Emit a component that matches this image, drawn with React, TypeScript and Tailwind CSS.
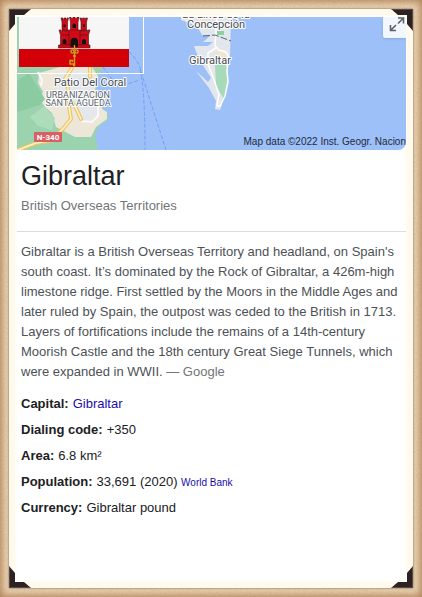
import React from "react";

const cornerPlaces = [
  "left-0 top-0",
  "right-0 top-0 rotate-90",
  "right-0 bottom-0 rotate-180",
  "left-0 bottom-0 -rotate-90",
];

function PhotoCorner({ place }: { place: string }) {
  return (
    <svg viewBox="0 0 22 22" aria-hidden="true" className={`absolute z-10 h-[22px] w-[22px] ${place}`}>
      <path d="M0 0H22L15 6H6V15L0 22Z" fill="#2c2224" />
      <path d="M0.5 21V0.5H21" fill="none" stroke="#5a4a42" strokeWidth="1" />
    </svg>
  );
}

function Grain() {
  return (
    <svg aria-hidden="true" className="absolute inset-0 h-full w-full opacity-20">
      <filter id="grain">
        <feTurbulence type="fractalNoise" baseFrequency="0.5" numOctaves="2" />
        <feColorMatrix values="0 0 0 0 0.4  0 0 0 0 0.25  0 0 0 0 0.1  1.6 0 0 0 -0.4" />
      </filter>
      <rect width="100%" height="100%" filter="url(#grain)" />
    </svg>
  );
}

function Flag() {
  return (
    <svg viewBox="0 0 110 50" role="img" aria-label="Flag of Gibraltar" className="block h-[50px] w-[110px]">
      <rect width="110" height="50" fill="#f6f6f6" />
      <rect y="32" width="110" height="18" fill="#d40008" />
      <g fill="#d10a18" stroke="#4a1014" strokeWidth="0.6">
        <path d="M42 1H44V2.500H45V1H47V2.500H48V1H49.500L48.500 5V14H43V5Z" />
        <path d="M61 1H62.500V2.500H63.500V1H65.500V2.500H66.500V1H68.500L67.500 5V14H62V5Z" />
        <path d="M50.500 0H52V1.500H54V0H56V1.500H58V0H60L59 5V14H51.500V5Z" />
        <path d="M40 13H42V14.500H43.500V13H46V14.500H48V13H62V14.500H64V13H67V14.500H68.500V13H71L69.500 18V28H41.500V18Z" />
        <path d="M39.500 28H71V31H39.500Z" />
        <path d="M42 18H50M61 18H69M50 14V28M61 14V28" fill="none" />
      </g>
      <g fill="#16100f">
        <path d="M51.500 30V24A3.800 4 0 0 1 59 24V30Z" />
        <path d="M43.500 27V24A2 2 0 0 1 47.500 24V27ZM63 27V24A2 2 0 0 1 67 24V27Z" />
        <path d="M53.500 11V8A1.800 2 0 0 1 57 8V11ZM44.500 10V7.500H46.500V10ZM64 10V7.500H66V10Z" />
      </g>
      <g fill="none" stroke="#d0a020" strokeWidth="1.4">
        <path d="M55.500 28V33" />
        <circle cx="53.500" cy="34.500" r="1.600" />
        <circle cx="57.500" cy="34.500" r="1.600" />
        <path d="M55.500 35V48.500H54M55.500 47H51V43.500H53.500V45M54 39H57" />
      </g>
    </svg>
  );
}

function MapDrawing() {
  return (
    <svg
      viewBox="17 17 389 133"
      preserveAspectRatio="xMinYMin slice"
      role="img"
      aria-label="Map of Gibraltar"
      className="absolute inset-0 h-full w-full"
    >
      <rect x="17" y="17" width="389" height="133" fill="#9dc0f9" />
      <path d="M17 17H100L104 66L97 78L95 91L103 98V110L108 112V120L99 126L95 136L98 150H17Z" fill="#9bd3ae" />
      <path d="M39 73L38 83L43 92L39 98L45 107L52 113L56 127L75 137L91 137L96 127L107 119V112L102 109V98L95 90L98 76L92 67H60Z" fill="#ece7d8" />
      <path d="M58 73L70 70L93 74L91 91L100 101V108L90 121L78 121L70 105L61 99L55 83Z" fill="#e4e7eb" />
      <path d="M17 81L29 73L37 86L45 99L40 105L17 112Z" fill="#8bcba2" />
      <path d="M30 117L44 106L55 118L52 130L38 126Z" fill="#acdcb9" />
      <path d="M38 72L42 80L41 86M74 104L79 113L82 121L92 122L98 116V104" fill="none" stroke="#f8f9fa" strokeWidth="2" />
      <g fill="none" strokeLinecap="round" strokeLinejoin="round">
        <path d="M18 150L36 143L49 141L62 130L71 119L69 106L68 88L65 79L72 68M90 67V77M81 119L76 108L67 96" stroke="#efc665" strokeWidth="4" />
        <path d="M18 150L36 143L49 141L62 130L71 119L69 106L68 88L65 79L72 68M90 67V77M81 119L76 108L67 96" stroke="#fff4ca" strokeWidth="1.500" />
      </g>
      <path d="M129 52Q139 60 142 75L166 150M140 70Q145 88 145 150M103 67L118 87L140 80" fill="none" stroke="#719ff0" strokeDasharray="4 2" />
      <path d="M181 17H231L230 56L228 54L230 62L226 68L228 77L227 85L224 93L222 104L220 110L215 109L216 101L209 88L196 71L208 82L211 78L206 70L199 59L194 46H208L213 42H203L210 36L202 35L197 26L181 20Z" fill="#e2e7ed" />
      <path d="M181 17L184 21L190 17ZM193 25L206 31L211 17H200ZM214 50L226 49L228 55L221 62Z" fill="#efe5d6" />
      <path d="M215 65L226 61L227 81L224 99L216 87Z" fill="#a7dab8" />
      <path d="M217 31H224V35H217Z" fill="#8cd29f" />
      <path d="M217 17L215 46L219 50L226 52L229 57L227 70L228 82L225 96L220 106H217L219 94L213 77L208 64V53L216 48" fill="none" stroke="#fff" strokeWidth="1.500" />
      <path d="M203 36L215 35L231 41" fill="none" stroke="#62666b" strokeDasharray="7 2" />
      <rect x="34" y="132" width="28" height="10" rx="1" fill="#d95f65" />
      <g fontFamily="Roboto, 'Liberation Sans', sans-serif" textAnchor="middle" stroke="#ffffff" strokeWidth="2" strokeLinejoin="round" paintOrder="stroke">
        <text x="90" y="86" fontSize="11" fill="#454b51">Patio Del Coral</text>
        <g fontSize="9" fill="#59636c">
          <text x="78" y="98">URBANIZACION</text>
          <text x="78" y="106">SANTA AGUEDA</text>
        </g>
        <g fontSize="11" fill="#454b51">
          <text x="216" y="18">La Línea de la</text>
          <text x="216" y="28">Concepción</text>
          <text x="210" y="64">Gibraltar</text>
        </g>
      </g>
      <text x="48" y="140" fontSize="8" fontWeight="700" fontFamily="Roboto, sans-serif" textAnchor="middle" fill="#fff">N-340</text>
    </svg>
  );
}

function MapPanel() {
  return (
    <div className="relative h-[133px] overflow-hidden rounded-br-lg">
      <MapDrawing />
      <div className="absolute top-0 left-0 h-[57px] w-[127px] border-r border-b border-white pl-0.5">
        <Flag />
      </div>
      <button
        type="button"
        aria-label="Expand map"
        className="absolute top-0 right-0 flex h-[21px] w-[23px] justify-end rounded-bl-xs bg-[#f2f6fd] pr-px shadow-sm"
      >
        <svg viewBox="0 0 16 16" className="h-4 w-4" fill="none" stroke="#5f6368" strokeWidth="1.600">
          <path d="M9 1H14.500V6.500M14.500 1L9 6.500M1.500 8V13.500H7M1.500 13.500L7 8" />
        </svg>
      </button>
      <span className="absolute right-0 bottom-0 text-[10px] leading-4 whitespace-nowrap text-[#222b38]">
        Map data ©2022 Inst. Geogr. Nacion
      </span>
    </div>
  );
}

function Fact({ label, children }: { label: string; children: React.ReactNode }) {
  return (
    <div className="flex items-baseline gap-1">
      <dt className="font-bold">{label}:</dt>
      <dd>{children}</dd>
    </div>
  );
}

export default function App() {
  return (
    <div className="relative flex min-h-screen bg-[#ead5b7] p-[9px] font-['Liberation_Sans',Arial,sans-serif] shadow-[inset_0_0_7px_2px_#b48357]">
      <Grain />
      <main className="relative min-w-0 flex-1 bg-white pt-2 pr-[7px] pb-2 pl-2 shadow-[0_0_2px_#765b42,inset_0_0_0_6px_#fffaed,inset_0_0_3px_7px_#fffaed]">
        {cornerPlaces.map((place) => (
          <PhotoCorner key={place} place={place} />
        ))}
        <MapPanel />
        <header className="border-b border-[#dadce0] px-1 pt-2 pb-[15px]">
          <h1 className="text-[27px] leading-9 text-[#202124]">Gibraltar</h1>
          <p className="pt-0.5 text-[13px] leading-5 text-[#70757a]">British Overseas Territories</p>
        </header>
        <p className="px-1 pt-[10px] text-[13px] leading-5 text-[#4d5156]">
          Gibraltar is a British Overseas Territory and headland, on Spain's south coast. It’s dominated by the Rock of
          Gibraltar, a 426m-high limestone ridge. First settled by the Moors in the Middle Ages and later ruled by
          Spain, the outpost was ceded to the British in 1713. Layers of fortifications include the remains of a
          14th-century Moorish Castle and the 18th century Great Siege Tunnels, which were expanded in WWII.{" "}
          <span className="text-[#70757a]">— Google</span>
        </p>
        <dl className="flex flex-col gap-1.5 px-1 pt-3 text-[13px] leading-5 text-[#202124]">
          <Fact label="Capital">
            <a href="#gibraltar" className="text-[#1a0dab]">Gibraltar</a>
          </Fact>
          <Fact label="Dialing code">+350</Fact>
          <Fact label="Area">6.8 km²</Fact>
          <Fact label="Population">
            33,691 (2020){" "}
            <a href="#world-bank" className="inline-block text-[10px] leading-none text-[#1a0dab]">World Bank</a>
          </Fact>
          <Fact label="Currency">Gibraltar pound</Fact>
        </dl>
      </main>
    </div>
  );
}
